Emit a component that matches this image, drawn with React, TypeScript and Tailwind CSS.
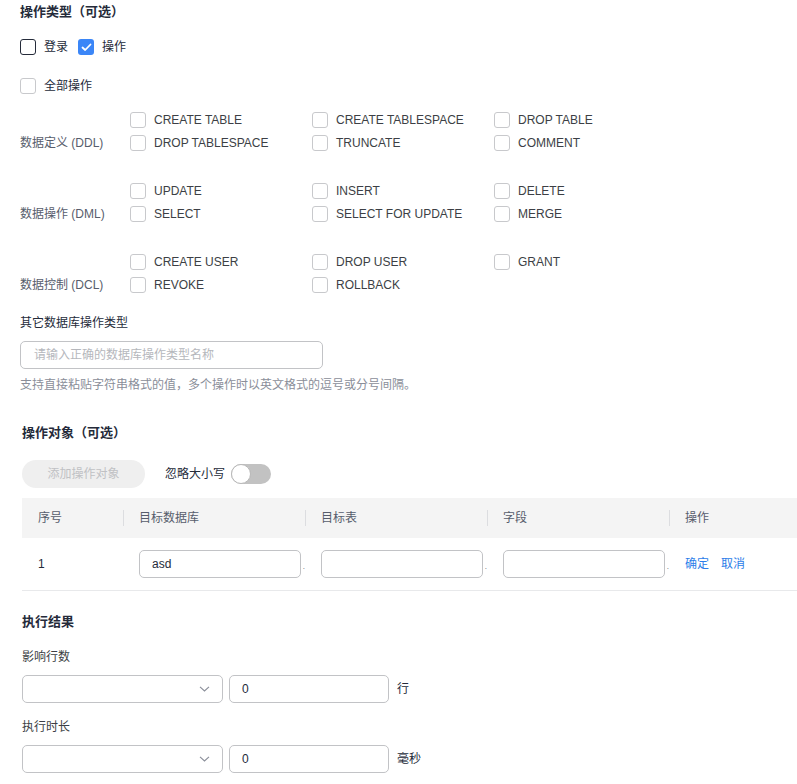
import React, { useState } from 'react';

const FONT = "font-['Liberation_Sans','Noto_Sans_CJK_SC',sans-serif]";

const groups = [
  {
    label: '数据定义 (DDL)',
    items: ['CREATE TABLE', 'CREATE TABLESPACE', 'DROP TABLE', 'DROP TABLESPACE', 'TRUNCATE', 'COMMENT'],
  },
  {
    label: '数据操作 (DML)',
    items: ['UPDATE', 'INSERT', 'DELETE', 'SELECT', 'SELECT FOR UPDATE', 'MERGE'],
  },
  {
    label: '数据控制 (DCL)',
    items: ['CREATE USER', 'DROP USER', 'GRANT', 'REVOKE', 'ROLLBACK'],
  },
];

const Box: React.FC<{ checked?: boolean; dark?: boolean }> = ({ checked, dark }) => {
  if (checked) {
    return (
      <span className="flex h-4 w-4 items-center justify-center rounded-[3px] bg-[#3b86f7]">
        <svg width="11" height="9" viewBox="0 0 11 9" fill="none">
          <path d="M1.5 4.5 L4.2 7 L9.5 1.5" stroke="white" strokeWidth="1.8" strokeLinecap="round" strokeLinejoin="round" />
        </svg>
      </span>
    );
  }
  return (
    <span
      className={`block h-4 w-4 rounded-[3px] border bg-white ${dark ? 'border-[#252b3a]' : 'border-[#c8c9cc]'}`}
    />
  );
};

const Chevron = () => (
  <svg width="11" height="6" viewBox="0 0 11 6" fill="none">
    <path d="M1 0.8 L5.5 5 L10 0.8" stroke="#8a8e99" strokeWidth="1.1" />
  </svg>
);

const Field: React.FC<{ value?: string; className?: string }> = ({ value, className }) => (
  <div className={`flex h-7 items-center rounded-[5px] border border-[#c2c3c6] bg-white px-3 text-xs text-[#252b3a] ${className ?? ''}`}>
    {value}
  </div>
);

const Select = () => (
  <div className="flex h-7 w-[201px] items-center justify-end rounded-[5px] border border-[#c2c3c6] bg-white pr-3">
    <Chevron />
  </div>
);

export default function App() {
  const [login, setLogin] = useState(false);
  const [op, setOp] = useState(true);

  return (
    <div className={`${FONT} min-h-[784px] w-[797px] overflow-hidden bg-white text-[#252b3a]`}>
      <div className="pl-5 pt-[2px]">
        <div className="flex h-5 items-center text-[13px] font-bold">操作类型（可选）</div>

        <div className="mt-[15px] flex h-5 items-center text-xs">
          <button className="flex items-center gap-2" onClick={() => setLogin(!login)}>
            <Box checked={login} dark />
            <span>登录</span>
          </button>
          <button className="ml-[10px] flex items-center gap-2" onClick={() => setOp(!op)}>
            <Box checked={op} dark />
            <span>操作</span>
          </button>
        </div>

        <div className="mt-[19px] flex h-5 items-center gap-2 text-xs">
          <Box />
          <span>全部操作</span>
        </div>

        <div className="mt-3 flex flex-col gap-[25px]">
          {groups.map((g) => (
            <div key={g.label} className="flex items-end">
              <div className="flex h-[23px] w-[110px] items-center text-xs text-[#575d6c]">{g.label}</div>
              <div className="grid grid-cols-[182px_182px_182px]">
                {g.items.map((it) => (
                  <div key={it} className="flex h-[23px] items-center gap-2 text-xs text-[#3c3f45]">
                    <Box />
                    <span>{it}</span>
                  </div>
                ))}
              </div>
            </div>
          ))}
        </div>

        <div className="mt-[17px] flex h-5 items-center text-xs">其它数据库操作类型</div>
        <div className="mt-2 flex h-7 w-[303px] items-center rounded-[5px] border border-[#c2c3c6] px-[13px] text-xs text-[#b5b7bc]">
          请输入正确的数据库操作类型名称
        </div>
        <div className="mt-[6px] flex h-5 items-center text-xs text-[#8a8e99]">
          支持直接粘贴字符串格式的值，多个操作时以英文格式的逗号或分号间隔。
        </div>
      </div>

      <div className="pl-[22px]">
        <div className="mt-[28px] flex h-5 items-center text-[13px] font-bold">操作对象（可选）</div>

        <div className="mt-[17px] flex h-7 items-center">
          <div className="flex h-7 w-[123px] items-center justify-center rounded-full bg-[#efefef] text-xs text-[#c0c1c4]">
            添加操作对象
          </div>
          <span className="ml-5 text-xs">忽略大小写</span>
          <div className="ml-[6px] flex h-5 w-10 items-center rounded-full bg-[#c2c2c2]">
            <span className="block h-5 w-5 rounded-full border border-[#b8b8b8] bg-white" />
          </div>
        </div>

        <div className="mt-[10px] w-[800px] text-xs">
          <div className="flex h-10 items-center bg-[#f4f4f4] text-[#575d6c]">
            <div className="w-[101px] shrink-0 pl-4">序号</div>
            {['目标数据库', '目标表', '字段', '操作'].map((h) => (
              <div key={h} className="flex w-[182px] shrink-0 items-center">
                <span className="h-4 w-px bg-[#dcdde0]" />
                <span className="pl-[15px]">{h}</span>
              </div>
            ))}
          </div>
          <div className="flex h-[53px] items-center border-b border-[#e8e9eb]">
            <div className="w-[101px] shrink-0 pl-4">1</div>
            {['asd', '', ''].map((v, i) => (
              <div key={i} className="flex w-[182px] shrink-0 items-end pl-4">
                <Field value={v} className="w-[162px]" />
                <span className="mb-[7px] ml-[2px] text-[8px] leading-none text-[#575d6c]">.</span>
              </div>
            ))}
            <div className="flex gap-3 pl-4 text-[#2b7de9]">
              <span>确定</span>
              <span>取消</span>
            </div>
          </div>
        </div>

        <div className="mt-[21px] flex h-5 items-center text-[13px] font-bold">执行结果</div>

        <div className="mt-[15px] flex h-5 items-center text-xs text-[#3c3f45]">影响行数</div>
        <div className="mt-2 flex items-center gap-[6px]">
          <Select />
          <Field value="0" className="w-[160px]" />
          <span className="ml-[2px] text-xs">行</span>
        </div>

        <div className="mt-[14px] flex h-5 items-center text-xs text-[#3c3f45]">执行时长</div>
        <div className="mt-2 flex items-center gap-[6px]">
          <Select />
          <Field value="0" className="w-[160px]" />
          <span className="ml-[2px] text-xs">毫秒</span>
        </div>
      </div>
    </div>
  );
}
